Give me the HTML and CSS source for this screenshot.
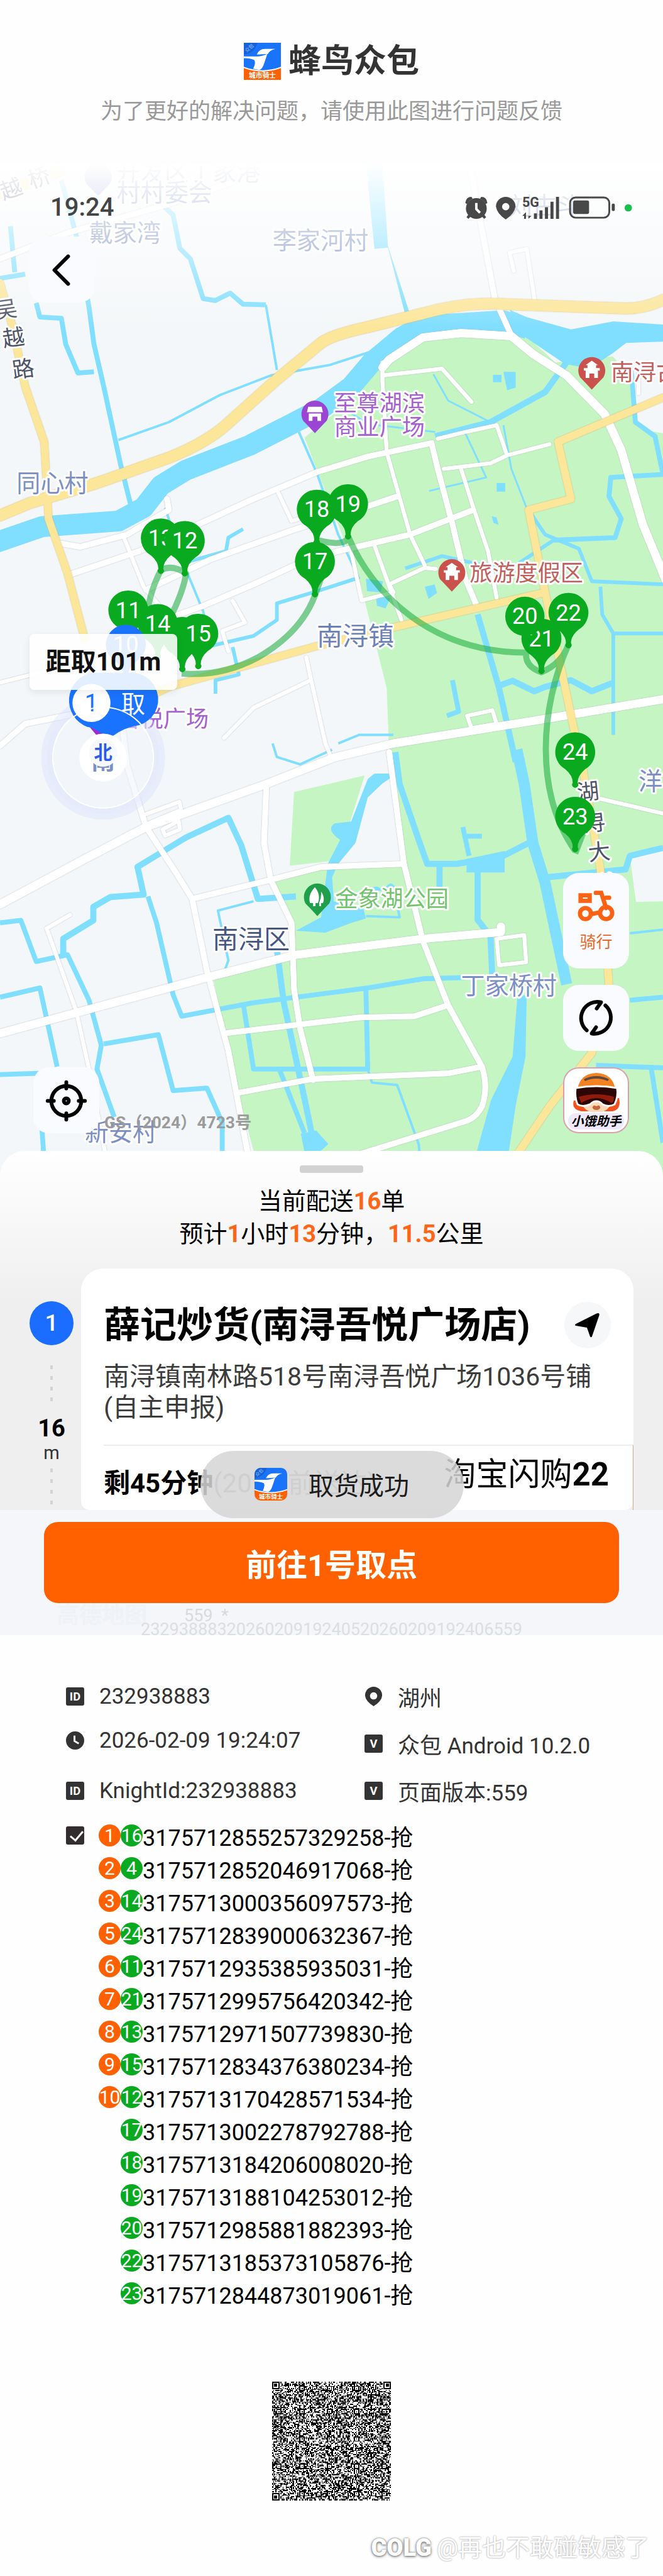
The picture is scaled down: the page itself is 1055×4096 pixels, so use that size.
FILE: index.html
```html
<!DOCTYPE html>
<html lang="zh-CN">
<head>
    <meta charset="utf-8">
    <title>蜂鸟众包</title>
    <link rel="stylesheet" href="styles.css">
</head>
<body>

<svg class="defs" width="0" height="0">
    <symbol id="logo" viewBox="0 0 60 60">
        <rect width="60" height="60" fill="#1a73fb"/>
        <path d="M0 0H22Q18 17 0 19z" fill="#1763d6"/>
        <text x="10" y="11" class="logo-corner" transform="rotate(-42 10 10)">众包</text>
        <path d="M21 19Q25 10 34 10H51Q42 12 39 18z" fill="#fff"/>
        <path d="M0 22H22Q29 22 38 18L33 33Q30 43 25 44L15 42Q20 33 17 28Q11 25 0 25z" fill="#fff"/>
        <path d="M0 39Q30 50 60 39V60H0z" fill="#fff"/>
        <path d="M0 41Q30 52 60 41V60H0z" fill="#ff6000"/>
        <text x="30" y="57" class="logo-foot">城市骑士</text>
    </symbol>
    <symbol id="pin" viewBox="-32 -32 64 96" overflow="visible">
        <path d="M0 -32A32 32 0 0 1 16 28Q4 38 4 50A5 5 0 1 1 -4 50Q-4 38 -16 28A32 32 0 0 1 0 -32z"/>
    </symbol>
    <symbol id="poi" viewBox="-22 -22 44 54" overflow="visible">
        <path d="M0 -22A22 22 0 0 1 19 11Q12 18 0 31Q-12 18 -19 11A22 22 0 0 1 0 -22z"/>
    </symbol>
    <symbol id="id" viewBox="0 0 30 30">
        <rect width="30" height="30" rx="3" fill="#333"/>
        <text x="15" y="22" class="glyph">ID</text>
    </symbol>
    <symbol id="ver" viewBox="0 0 30 30">
        <rect width="30" height="30" rx="3" fill="#333"/>
        <text x="15" y="22" class="glyph">V</text>
    </symbol>
</svg>

<header class="top">
    <div class="brand">
        <svg class="brand-logo"><use href="#logo"/></svg>
        <h1>蜂鸟众包</h1>
    </div>
    <p>为了更好的解决问题，请使用此图进行问题反馈</p>
</header>

<section class="phone">
    <div class="map">
        <svg class="map-canvas" viewBox="0 266 1080 1650">
            <defs>
                <linearGradient id="fade" x1="0" y1="0" x2="0" y2="1">
                    <stop offset="0" stop-color="#fff"/>
                    <stop offset="0.3" stop-color="#fff" stop-opacity="0.7"/>
                    <stop offset="1" stop-color="#fff" stop-opacity="0"/>
                </linearGradient>
            </defs>
            <rect y="266" width="1080" height="1650" fill="#f4f7f9"/>

            <!-- parks -->
            <g fill="#c6f5c4">
                <path d="M496 712L585 640 625 585 690 548 740 540H850L905 590 998 580 1024 607 1033 690 1080 705V1916H425L413 1873 375 1732 348 1595 479 1554 475 1497 441 1432 544 1406H654L634 1233 630 1120 585 942z"/>
                <path d="M479 1289L594 1262 551 1400 472 1409z"/>
            </g>
            <g fill="#f4f7f9">
                <path d="M998 575L1020 560H1080V705L1050 700 1033 640z"/>
                <path d="M1026 1393L1080 1380V1467L1036 1468z"/>
                <path d="M554 1402L579 1372 599 1298 628 1262 654 1402z"/>
            </g>

            <!-- water -->
            <g class="water">
                <path class="w40" d="M-10 884L69 857 193 848 234 826 262 790 303 765 406 725 475 690 523 665 572 629 606 589 654 549 689 530 820 522 860 535"/>
                <path class="w9" d="M930 580L888 638 799 687 709 710"/>
                <path class="w7" d="M17 368L24 443M0 453L41 446M59 493L65 516 100 518 107 560 127 607 153 605"/>
                <path class="w7" d="M100 293L124 382 145 500 153 560 169 629 196 754 214 826"/>
                <path class="w7" d="M265 334L282 350 293 404 310 421 331 486 351 489 375 477 396 495 433 496"/>
                <path class="w4" d="M433 496L444 560 451 602M193 716L275 687 358 643 441 611 537 594 620 567"/>
                <path class="w4" d="M482 692L517 772 551 870 585 942M269 826L296 910 331 995 344 1049"/>
                <path class="w5" d="M303 915L368 897 372 875 396 861M585 940L523 960 451 982V1009L413 1035 344 1051M379 1053L389 1098 351 1107V1129"/>
                <path class="w7" d="M1028 600L1035 687 1067 710 1080 772 995 777 992 808 1012 844 1002 875 902 879"/>
                <path class="w5" d="M861 830L888 870 943 893 964 946 1080 951M978 955L981 1000 999 1031H1080M999 1031V1196M902 879L840 920 810 925 720 905 660 925"/>
                <path class="w3" d="M706 609L730 652 799 687M820 692L833 763 861 835M758 705L792 777 699 799M560 665L600 690 709 703"/>
                <path class="w9" d="M778 1000L813 1120 840 1240M813 1116L835 1108 870 1125 888 1118 930 1107 964 1125 999 1111"/>
                <path class="w18" d="M842 1220L854 1276 868 1372 888 1437 923 1602"/>
                <path class="w9" d="M888 1428L1019 1415 1026 1393 1080 1380M861 1372L820 1393 744 1406 696 1406 682 1367 651 1276 644 1224M716 1411V1445M778 1406V1497L799 1524 802 1593"/>
                <path class="w7" d="M0 1502L34 1498 59 1565 110 1554 145 1628 165 1701 158 1740 186 1818"/>
                <path class="w9" d="M103 1554V1528L152 1498V1476L180 1460 234 1456 224 1411 303 1363 372 1331 393 1376 420 1463 482 1459"/>
                <path class="w7" d="M241 1459L255 1502 282 1619 296 1654 413 1632 599 1608 689 1593 758 1591"/>
                <path class="w4" d="M413 1467L355 1482 372 1563 366 1580M596 1491L651 1493 648 1478M599 1740L606 1762 647 1766 682 1862 684 1880"/>
                <path class="w9" d="M451 1545L462 1630 496 1788 515 1880"/>
                <path class="w7" d="M396 1632L413 1740 599 1740 596 1608M455 1740L496 1844M169 1699L258 1684 282 1775 337 1771 362 1827V1880M0 1623L65 1608 93 1736M0 1749L62 1747 72 1890"/>
                <path class="w4" d="M444 1210L451 1232 489 1244 541 1220M551 1210L585 1196 641 1196M1026 1519L1080 1513"/>
                <path class="w7" d="M971 1734L1080 1738M1061 1740L1080 1860M1026 1628L1080 1623M737 1107L747 1158 728 1165M754 1346L764 1393M756 1361H785"/>
            </g>
            <g fill="#80deff">
                <path d="M596 266H623L632 400 668 512H660L632 403 610 405z"/>
                <path d="M830 504L858 516 930 536 999 523 1080 528V556L1020 558 998 575 960 600 920 592 850 545z"/>
                <path d="M843 1620H858L856 1720 840 1800 828 1880H775L800 1790 835 1720z"/>
                <path d="M610 1259H647L623 1275 599 1298 579 1372 551 1406 541 1428 544 1467 592 1479 596 1495 572 1502 530 1518 482 1515 523 1493 534 1406 554 1367Q530 1350 545 1340L572 1337 599 1268z"/>
                <path d="M760 1398L822 1385V1420H760zM600 1450q12 -14 25 0zM625 1450q12 -24 22 0zM490 1845L515 1840 535 1862 515 1880H497z"/>
                <path d="M803 610h14v12h-14zM820 605h20v26l-14 4zM809 786h14v14h-14zM801 840l8 2 3 12-8-3zM596 942l28 4-4 18-22-2zM692 955l16-4 4 14-14 10zM612 968l24 6-8 16-14-4z"/>
            </g>

            <!-- minor roads, edge first and fill on top -->
            <g class="roads edge">
                <use href="#r14"/><use href="#r9"/><use href="#r6"/>
            </g>
            <g class="roads fill">
                <path id="r14" class="r14" d="M623 598L634 585 689 549 751 542 833 547 868 576 923 611 985 674 1012 732 1047 853 1084 943M1080 1138L895 1169 641 1210 544 1233 434 1276 238 1346 138 1398 0 1472M0 1682L344 1589 482 1554 689 1528 816 1517V1508"/>
                <path id="r9" class="r9" d="M765 266L806 486 833 546M0 421L110 379 275 332 380 296M96 884L131 890 207 870 275 830 272 812M114 935L227 897 344 844 413 812 517 768 599 743 703 721 713 763 737 853 758 942 775 982M238 960L344 910 482 861 565 835 647 808M255 1013L331 986 413 951 482 919 551 897 668 870 771 830M0 1214L41 1178 172 1152M200 1187L207 1246 238 1346 289 1424 313 1463 337 1580 372 1710 406 1890M434 1276L430 1372 441 1432 475 1502 479 1610 489 1675 510 1758M634 1224L658 1406 689 1532 730 1636 785 1736Q796 1770 785 1801Q775 1820 758 1825L565 1885M313 1463L441 1432 523 1411 658 1406M365 1682L585 1656 675 1654 730 1636M386 1779L510 1756 730 1747 785 1736"/>
                <path id="r6" class="r6" d="M871 489L858 405 830 411 837 441M623 611L720 600 768 654M623 590V620L630 736 668 870 692 920M200 870L234 955 275 1004M451 797L475 848 510 837M713 714L758 703 809 692 826 741M723 763L799 754 826 741 895 723M751 763L771 826 795 897 809 973M572 897L589 977 641 964 634 951 692 924 710 926M610 888L654 1009M379 978L399 1013 362 1027 372 1060M0 1111L138 1076M499 1070L506 1103 530 1210 541 1236M506 1107L413 1152 365 1201M809 1528L854 1522 857 1566 813 1571zM114 1489L76 1511 124 1645 145 1740 172 1880M761 1165L802 1156 809 1178 768 1185zM978 1300L1080 1324M238 1325L292 1305 295 1318 242 1340M265 1350l26-14 2 14-24 10zM1040 640V600L1055 590"/>
            </g>

            <!-- trunk roads -->
            <g class="trunk edge">
                <use href="#t18"/><use href="#t12"/>
            </g>
            <g class="trunk fill">
                <path id="t18" class="t18" d="M0 839L48 819 158 786 275 745Q337 720 370 690L448 620 523 558Q540 545 600 532L689 510Q760 490 826 495L1019 502Q1050 502 1080 488M0 314L96 278"/>
                <path id="t12" class="t12" d="M0 460L20 530 41 629 72 719 76 786 79 844 110 933 138 1040M230 1140L275 1118 510 1053 654 1018 888 964 861 830 930 812 909 719 1080 647M888 964L916 1098 937 1196 950 1255 978 1415 992 1602 964 1714 895 1801 835 1890"/>
            </g>

            <!-- delivery route -->
            <g class="route">
                <path d="M296 1096Q360 1102 420 1070Q490 1030 513 969L527 930M517 879Q560 890 568 875M568 875C606 964 700 1062 857 1062Q855 1085 882 1094Q915 1080 926 1049C880 1150 870 1290 937 1385M262 928Q280 918 303 933Q300 960 275 1010M262 928Q240 970 238 1020M937 1389L952 1350"/>
            </g>

            <g class="label village">
                <text x="145" y="380">戴家湾</text>
                <text x="444" y="392">李家河村</text>
                <text x="27" y="787">同心村</text>
                <text x="751" y="1605">丁家桥村</text>
                <text x="138" y="1844">新安村</text>
                <text x="1040" y="1272">洋</text>
                <text x="190" y="280">开发区丁家港</text>
                <text x="190" y="314">村村委会</text>
                <text x="828" y="336">刘古斗</text>
            </g>
            <g class="label town">
                <text x="516" y="1036">南浔镇</text>
                <text x="346" y="1529" class="dark">南浔区</text>
            </g>
            <g class="label road">
                <text x="-8" y="504" transform="rotate(-8 10 504)">吴</text>
                <text x="4" y="550" transform="rotate(-8 22 550)">越</text>
                <text x="20" y="601" transform="rotate(-8 37 601)">路</text>
                <text x="0" y="308" transform="rotate(-20 18 308)">越</text>
                <text x="46" y="290" transform="rotate(-20 62 290)">桥</text>
                <text x="940" y="1289" transform="rotate(-6 958 1289)">湖</text>
                <text x="950" y="1340" transform="rotate(-6 968 1340)">浔</text>
                <text x="958" y="1387" transform="rotate(-6 976 1387)">大</text>
                <text x="966" y="1440" transform="rotate(-6 984 1440)">道</text>
            </g>
            <g class="label poi">
                <text x="544" y="657" fill="#a55fd0">至尊湖滨</text>
                <text x="544" y="695" fill="#a55fd0">商业广场</text>
                <text x="192" y="1170" fill="#a55fd0">吾悦广场</text>
                <text x="995" y="606" fill="#c0605c">南浔古镇</text>
                <text x="765" y="933" fill="#c0605c">旅游度假区</text>
                <text x="546" y="1463" fill="#72c46c">金象湖公园</text>
            </g>
            <use href="#poi" x="491" y="652" width="44" height="54" fill="#9b45d4"/>
            <use href="#poi" x="942" y="581" width="44" height="54" fill="#c9534c"/>
            <use href="#poi" x="714" y="910" width="44" height="54" fill="#c9534c"/>
            <use href="#poi" x="495" y="1438" width="44" height="54" fill="#1f9f4a"/>
            <use href="#poi" x="138" y="266" width="44" height="54" fill="#9aa2d8"/>
            <g fill="#fff">
                <path d="M502 662h22l2 9h-26zM503 673h20v12h-6v-7h-8v7h-6z"/>
                <path id="gate" d="M964 587l10 7h-3v5h6v4h-3v12h-6v-7h-8v7h-6v-12h-3v-4h6v-5h-3z"/>
                <use href="#gate" x="-228" y="329"/>
                <path d="M513 1444q10 12 5 26h-4v5h-4v-5h-5q-4-14 8-26zM523 1451q7 10 3 19h-3v5h-3v-6q4-9 3-18z"/>
            </g>

            <g class="pins">
                <use href="#pin" x="230" y="844" width="64" height="96"/>
                <text x="262" y="876">13</text>
                <use href="#pin" x="269" y="848" width="64" height="96"/>
                <text x="301" y="880">12</text>
                <use href="#pin" x="484" y="797" width="64" height="96"/>
                <text x="516" y="829">18</text>
                <use href="#pin" x="535" y="788" width="64" height="96"/>
                <text x="567" y="820">19</text>
                <use href="#pin" x="481" y="882" width="64" height="96"/>
                <text x="513" y="914">17</text>
                <use href="#pin" x="177" y="961" width="64" height="96"/>
                <text x="209" y="993">11</text>
                <use href="#pin" x="265" y="1004" width="64" height="96"/>
                <use href="#pin" x="225" y="983" width="64" height="96"/>
                <text x="257" y="1015">14</text>
                <use href="#pin" x="291" y="999" width="64" height="96"/>
                <text x="323" y="1031">15</text>
                <use href="#pin" x="850" y="1007" width="64" height="96"/>
                <text x="882" y="1039">21</text>
                <circle cx="855" cy="1003" r="32"/>
                <text x="855" y="1003">20</text>
                <use href="#pin" x="894" y="965" width="64" height="96"/>
                <text x="926" y="997">22</text>
                <use href="#pin" x="905" y="1192" width="64" height="96"/>
                <text x="937" y="1224">24</text>
                <use href="#pin" x="905" y="1297" width="64" height="96"/>
                <text x="937" y="1329">23</text>
                <use href="#pin" x="173" y="1017" width="64" height="96" class="blue"/>
                <text x="205" y="1049">10</text>
            </g>

            <!-- pickup marker and own position -->
            <circle cx="168" cy="1233" r="92" class="halo"/>
            <path d="M140 1176L160 1200 176 1194zM180 1200L206 1180 190 1176z" fill="#9b2fd0"/>
            <path d="M149 1095H210A42 42 0 0 1 218 1182Q200 1186 185 1197Q174 1200 160 1190Q150 1184 142 1183A46 46 0 0 1 149 1095z" fill="#1a73ff"/>
            <circle cx="149" cy="1144" r="31" fill="#fff"/>
            <text x="149" y="1144" class="pick" fill="#1a73ff">1</text>
            <text x="217" y="1146" class="pick" fill="#fff">取</text>
            <circle cx="168" cy="1233" r="82" class="ring"/>
            <circle cx="168" cy="1233" r="39" fill="#fff"/>
            <text x="168" y="1239" class="self under">南</text>
            <circle cx="168" cy="1225" r="23" fill="#f8f9ff"/>
            <text x="168" y="1225" class="self">北</text>

            <rect y="266" width="1080" height="270" fill="url(#fade)"/>
            <text x="170" y="1827" class="licence">GS（2024）4723号</text>
        </svg>

        <div class="status">
            <span>19:24</span>
            <svg class="status-icons" viewBox="0 0 272 40">
                <g fill="#484848">
                    <circle cx="18" cy="21" r="17"/>
                    <path d="M0 12Q1 2 10 2L12 5Q5 8 3 14zM36 12Q35 2 26 2L24 5Q31 8 33 14zM5 31l4 3-4 4-3-3zM31 31l-4 3 4 4 3-3z"/>
                    <path d="M66 2A16 16 0 0 1 82 18Q80 30 66 39Q52 30 50 18A16 16 0 0 1 66 2zM66 12a6 6 0 1 0 0 12a6 6 0 1 0 0-12z" fill-rule="evenodd"/>
                    <path d="M99 27v11h-3v-5h-3zM103 27v11l5-5h-5zM112 29h5v9h-5zM121 24h5v14h-5zM130 19h5v19h-5zM139 10h5v28h-5zM148 2h5v36h-5z"/>
                    <rect x="176" y="8" width="26" height="22" rx="3"/>
                    <rect x="239" y="13" width="5" height="12" rx="2"/>
                </g>
                <path d="M18 12v10l6 6" fill="none" stroke="#fff" stroke-width="4"/>
                <text x="93" y="18">5G</text>
                <rect x="171" y="3" width="64" height="33" rx="9" fill="none" stroke="#484848" stroke-width="3"/>
                <circle cx="266" cy="20" r="6" fill="#1ac04e"/>
            </svg>
        </div>

        <button class="tile back" aria-label="返回">
            <svg viewBox="0 0 106 106"><path d="M63 32L41 54l22 22"/></svg>
        </button>

        <div class="distance">距取101m</div>

        <button class="tile locate" aria-label="定位">
            <svg viewBox="0 0 106 106"><circle cx="53" cy="54" r="24"/><circle cx="53" cy="54" r="4"/><path d="M53 24v10M53 74v10M23 54h10M73 54h10"/></svg>
        </button>

        <div class="tools">
            <button class="tile ride">
                <svg viewBox="0 0 62 50"><path d="M5 7h15v9H5zM30 3h9l8 25M47 11h5"/><circle cx="13" cy="37" r="9"/><circle cx="47" cy="36" r="10"/><path d="M22 38l15-3"/></svg>
                骑行
            </button>
            <button class="tile refresh" aria-label="刷新">
                <svg viewBox="0 0 106 106"><path d="M38 73A26 26 0 0 1 61 28L54 38M68 33A26 26 0 0 1 46 78L53 68"/></svg>
            </button>
            <button class="tile helper">
                <svg viewBox="0 0 80 62">
                    <path d="M4 44Q0 58 16 61H66Q80 58 76 40z" fill="#f4511f"/>
                    <path d="M10 26Q14 1 40 0Q66 1 70 26z" fill="#f58220"/>
                    <path d="M20 10Q40 0 60 10L58 13Q40 5 22 13z" fill="#5a4a42"/>
                    <ellipse cx="40" cy="49" rx="22" ry="14" fill="#ffd9b8"/>
                    <path d="M7 24Q40 18 73 24Q75 38 69 50Q60 55 50 50Q40 40 30 50Q18 55 10 50Q5 38 7 24z" fill="#2c0505" stroke="#fff" stroke-width="3"/>
                    <path d="M12 38Q40 30 68 38Q68 46 64 48Q40 32 16 48z" fill="#8f1c0a"/>
                    <path d="M37 55q3 2 6 0" fill="none" stroke="#c46a40"/>
                </svg>
                <b>小饿助手</b>
            </button>
        </div>
    </div>

    <div class="sheet">
        <div class="handle"></div>
        <p class="summary">当前配送<b>16</b>单<br>预计<b>1</b>小时<b>13</b>分钟，<b>11.5</b>公里</p>

        <div class="stop">
            <div class="track">
                <span class="num">1</span>
                <i class="dash"></i>
                <strong>16</strong>
                <small>m</small>
                <i class="dash"></i>
            </div>
            <article class="card">
                <div class="card-head">
                    <h2>薛记炒货(南浔吾悦广场店)</h2>
                    <button class="nav" aria-label="导航"><svg viewBox="0 0 72 72"><path d="M54 21L43 53Q42 56 40 54L35 40L18 37Q15 36 18 34L50 18Q55 16 54 21z"/></svg></button>
                </div>
                <p class="address">南浔镇南林路518号南浔吾悦广场1036号铺<br>(自主申报)</p>
                <div class="card-foot">
                    <p class="left"><b>剩45分钟</b>(20:09前送达)</p>
                    <p class="source">淘宝闪购<b>22</b></p>
                </div>
            </article>
        </div>

        <div class="action">
            <button class="go">前往1号取点</button>
            <p class="ver"><span>高德地图</span>559&nbsp; *</p>
            <p class="trace">2329388832026020919240520260209192406559</p>
        </div>

        <div class="toast">
            <svg><use href="#logo"/></svg>
            取货成功
        </div>
    </div>
</section>

<section class="report">
    <div class="info">
        <div class="item"><svg><use href="#id"/></svg>232938883</div>
        <div class="item"><svg viewBox="0 0 30 34"><path d="M15 1a14 14 0 0 1 14 15q-1 9-14 17q-13-8-14-17a14 14 0 0 1 14-15zM15 10a6 6 0 1 0 0 12a6 6 0 1 0 0-12z" fill="#333" fill-rule="evenodd"/></svg>湖州</div>
        <div class="item time"><svg viewBox="0 0 30 30"><circle cx="15" cy="15" r="15" fill="#333"/><path d="M14 7v9l7 4" fill="none" stroke="#fff" stroke-width="3"/></svg>2026-02-09 19:24:07</div>
        <div class="item"><svg><use href="#ver"/></svg>众包 Android 10.2.0</div>
        <div class="item"><svg><use href="#id"/></svg>KnightId:232938883</div>
        <div class="item"><svg><use href="#ver"/></svg>页面版本:559</div>
    </div>

    <div class="orders">
        <input type="checkbox" id="grab" aria-label="订单" checked>
        <ul>
            <li><i class="o">1</i><i class="g">16</i>3175712855257329258-抢</li>
            <li><i class="o">2</i><i class="g">4</i>3175712852046917068-抢</li>
            <li><i class="o">3</i><i class="g">14</i>3175713000356097573-抢</li>
            <li><i class="o">5</i><i class="g">24</i>3175712839000632367-抢</li>
            <li><i class="o">6</i><i class="g">11</i>3175712935385935031-抢</li>
            <li><i class="o">7</i><i class="g">21</i>3175712995756420342-抢</li>
            <li><i class="o">8</i><i class="g">13</i>3175712971507739830-抢</li>
            <li><i class="o">9</i><i class="g">15</i>3175712834376380234-抢</li>
            <li><i class="o">10</i><i class="g">12</i>3175713170428571534-抢</li>
            <li><i></i><i class="g">17</i>3175713002278792788-抢</li>
            <li><i></i><i class="g">18</i>3175713184206008020-抢</li>
            <li><i></i><i class="g">19</i>3175713188104253012-抢</li>
            <li><i></i><i class="g">20</i>3175712985881882393-抢</li>
            <li><i></i><i class="g">22</i>3175713185373105876-抢</li>
            <li><i></i><i class="g">23</i>3175712844873019061-抢</li>
        </ul>
    </div>

    <svg class="qr" viewBox="0 0 113 113"><path id="qr"/></svg>

    <footer class="mark"><b>COLG</b>@再也不敢碰敏感了</footer>
</section>

<script src="qr.js"></script>
</body>
</html>
```

FILE: styles.css
```css
* {
    box-sizing: border-box;
}

body {
    margin: 0;
    background: #fefefe;
    color: #000;
    font-family: Roboto, "Noto Sans CJK SC", sans-serif;
}

h1, h2, p, ul {
    margin: 0;
    padding: 0;
}

button {
    border: 0;
    padding: 0;
    font-family: inherit;
}

.defs {
    position: absolute;
}

.logo-corner {
    font-size: 8px;
    fill: #8fc0ff;
    text-anchor: middle;
}

.logo-foot {
    font-size: 11px;
    font-weight: bold;
    fill: #fff;
    text-anchor: middle;
}

.glyph {
    font-size: 19px;
    font-weight: bold;
    fill: #fff;
    text-anchor: middle;
}

/* header */

.top {
    padding: 68px 0 57px;
    text-align: center;
}

.brand {
    display: flex;
    justify-content: center;
    align-items: center;
    gap: 12px;
    height: 59px;
}

.brand-logo {
    width: 59px;
    height: 59px;
}

h1 {
    font-size: 52px;
    line-height: 60px;
    color: #333;
}

.top p {
    margin-top: 26px;
    font-size: 35px;
    line-height: 50px;
    color: #999;
}

/* map */

.map {
    position: relative;
}

.map-canvas {
    display: block;
    width: 100%;
}

.water path {
    fill: none;
    stroke: #80deff;
    stroke-linejoin: round;
}

.water .w3 { stroke-width: 3px; }
.water .w4 { stroke-width: 4px; }
.water .w5 { stroke-width: 6px; }
.water .w7 { stroke-width: 8px; }
.water .w9 { stroke-width: 10px; }
.water .w18 { stroke-width: 18px; }
.water .w40 { stroke-width: 34px; }

.roads, .trunk {
    fill: none;
    stroke-linejoin: round;
    stroke-linecap: round;
}

.roads.fill { stroke: #fff; }
.r14 { stroke-width: 13px; }
.r9 { stroke-width: 9px; }
.r6 { stroke-width: 6px; }

.trunk.fill { stroke: #fce69a; }
.t18 { stroke-width: 18px; }
.t12 { stroke-width: 12px; }

.roads.edge {
    stroke: #fff;
    filter: drop-shadow(0 0 1px #b9bcc4);
}

.trunk.edge {
    stroke: #e6cd86;
    filter: drop-shadow(0 0 1px #d6b968);
}

.route path {
    fill: none;
    stroke: #16a93a;
    stroke-opacity: 0.55;
    stroke-width: 10px;
    stroke-linejoin: round;
}

.map text {
    dominant-baseline: central;
}

.label {
    stroke: #fff;
    stroke-width: 6px;
    stroke-linejoin: round;
    paint-order: stroke;
}

.village {
    font-size: 39px;
    fill: #7b8fc4;
}

.town {
    font-size: 42px;
    fill: #6a82b8;
}

.town .dark {
    fill: #455680;
}

.road {
    font-size: 36px;
    fill: #4d5468;
}

.poi {
    font-size: 37px;
}

.pins {
    font-size: 37px;
    text-anchor: middle;
    fill: #09aa20;
}

.pins text {
    fill: #fff;
}

.pins .blue {
    fill: #1a73ff;
}

.pick {
    font-size: 39px;
    text-anchor: middle;
}

.halo {
    fill: rgba(240, 243, 252, 0.5);
    stroke: rgba(210, 218, 255, 0.35);
    stroke-width: 18px;
}

.ring {
    fill: none;
    stroke: #fff;
    stroke-width: 2px;
}

.self {
    font-size: 30px;
    font-weight: bold;
    text-anchor: middle;
    fill: #2c5be8;
}

.self.under {
    font-size: 39px;
    fill: #7b8fc4;
}

.licence {
    font-size: 27px;
    font-weight: bold;
    fill: #9b9b9b;
}

.status {
    position: absolute;
    top: 48px;
    left: 80px;
    right: 49px;
    display: flex;
    justify-content: space-between;
    align-items: center;
    font-size: 40px;
    line-height: 44px;
    font-weight: 500;
    color: #444;
}

.status-icons {
    width: 266px;
    height: 39px;
}

.status-icons text {
    dominant-baseline: auto;
    font-size: 22px;
    font-weight: bold;
    fill: #484848;
}

.tile {
    display: block;
    width: 105px;
    height: 105px;
    border-radius: 25px;
    background: #fafbfe;
}

.tile svg {
    fill: none;
    stroke: #000;
    stroke-width: 6px;
    stroke-linecap: round;
    stroke-linejoin: round;
}

.back {
    position: absolute;
    top: 116px;
    left: 46px;
}

.locate {
    position: absolute;
    left: 53px;
    bottom: 70px;
}

.distance {
    position: absolute;
    top: 748px;
    left: 47px;
    width: 235px;
    height: 89px;
    border-radius: 8px;
    background: rgba(255, 255, 255, 0.88);
    box-shadow: 0 4px 12px rgba(0, 0, 0, 0.08);
    font-size: 40px;
    line-height: 89px;
    font-weight: bold;
    text-align: center;
    color: #111;
}

.tools {
    position: absolute;
    right: 54px;
    bottom: 70px;
    display: flex;
    flex-direction: column;
    gap: 26px;
}

.ride {
    height: 152px;
    font-size: 26px;
    line-height: 36px;
    color: #e8682a;
}

.ride svg {
    display: block;
    width: 60px;
    height: 50px;
    margin: 4px auto 14px;
    stroke: #fb6214;
    stroke-width: 7px;
    stroke-linejoin: miter;
}

.helper {
    border: 2px solid #dba0ac;
    background: #fff;
    font-size: 20px;
    font-style: italic;
    line-height: 26px;
}

.helper svg {
    display: block;
    width: 80px;
    height: 62px;
    margin: 4px auto 2px;
    stroke: none;
}

.helper b {
    display: block;
    margin: 0 6px;
    border-radius: 12px;
    background: #efe8f8;
    color: #000;
}

/* bottom sheet */

.sheet {
    position: relative;
    margin-top: -42px;
    padding-top: 23px;
    border-radius: 40px 40px 0 0;
    background: linear-gradient(#fff, #efefef 240px);
}

.handle {
    width: 101px;
    height: 12px;
    margin: 0 auto 19px;
    border-radius: 4px;
    background: #d2d2d2;
}

.summary {
    font-size: 38px;
    line-height: 52px;
    text-align: center;
}

.summary b {
    color: #fd6617;
}

.stop {
    display: flex;
    margin-top: 29px;
    padding-right: 47px;
}

.track {
    flex: 0 0 129px;
    display: flex;
    flex-direction: column;
    align-items: center;
    padding: 52px 0 8px 35px;
}

.num {
    width: 70px;
    height: 70px;
    border-radius: 50%;
    background: #1a6dff;
    color: #fff;
    font-size: 37px;
    line-height: 70px;
    font-weight: 500;
    text-align: center;
}

.dash {
    flex: 1;
    width: 4px;
    margin: 32px 0 20px;
    background: repeating-linear-gradient(#d3d3d3 0 6px, transparent 6px 17px);
}

.dash:last-child {
    flex: 0 0 58px;
    margin: 6px 0 0;
}

.track strong {
    font-size: 38px;
    line-height: 40px;
}

.track small {
    font-size: 29px;
    line-height: 38px;
    color: #333;
}

.card {
    flex: 1;
    min-width: 0;
    padding: 55px 0 0 36px;
    border-radius: 35px 35px 14px 14px;
    background: #fff;
}

.card-head {
    display: flex;
    justify-content: space-between;
    align-items: center;
    height: 70px;
    padding-right: 36px;
}

h2 {
    font-size: 58px;
    line-height: 70px;
    white-space: nowrap;
}

.nav {
    width: 74px;
    height: 74px;
    border-radius: 50%;
    background: #f5f7f9;
}

.address {
    margin: 23px 0 34px;
    font-size: 41px;
    line-height: 49px;
    color: #3c3c3c;
}

.card-foot {
    display: flex;
    justify-content: space-between;
    height: 104px;
    padding-right: 38px;
    border-top: 2px solid #eee;
    border-right: 1px solid #f5a070;
    line-height: 60px;
    white-space: nowrap;
}

.left {
    padding-top: 30px;
    font-size: 42px;
    color: #aaa;
}

.left b {
    color: #000;
}

.source {
    padding-top: 16px;
    font-size: 51px;
}

.action {
    height: 199px;
    padding: 19px 70px 0;
    background: #f4f6f9;
}

.go {
    display: block;
    width: 100%;
    height: 129px;
    border-radius: 22px;
    background: #ff6000;
    color: #fff;
    font-size: 49px;
    font-weight: bold;
}

.ver {
    display: flex;
    align-items: center;
    margin: 8px 0 0 20px;
    font-size: 27px;
    line-height: 24px;
    color: #d8dadd;
}

.ver span {
    width: 203px;
    font-size: 36px;
    font-weight: bold;
    color: #eff2f6;
}

.trace {
    font-size: 27px;
    line-height: 20px;
    text-align: center;
    color: #dcdee1;
}

.toast {
    position: absolute;
    left: 50%;
    bottom: 186px;
    display: flex;
    align-items: center;
    justify-content: center;
    gap: 34px;
    width: 419px;
    height: 107px;
    margin-left: -209px;
    border-radius: 54px;
    background: rgba(213, 213, 213, 0.86);
    font-size: 40px;
    color: #1c1c1c;
}

.toast svg {
    width: 52px;
    height: 52px;
    border-radius: 10px;
}

/* report */

.report {
    padding: 60px 0 22px;
}

.info {
    display: grid;
    grid-template-columns: 1fr 1fr;
    grid-auto-rows: 75px;
    padding-left: 105px;
    font-size: 35px;
    color: #333;
}

.item {
    display: flex;
    align-items: center;
    gap: 24px;
}

.item svg {
    width: 29px;
    height: 33px;
}

.time {
    height: 65px;
}

.orders {
    display: flex;
    gap: 23px;
    margin-top: 8px;
    padding-left: 105px;
}

.orders input {
    appearance: none;
    width: 29px;
    height: 29px;
    margin: 11px 0 0;
    border-radius: 3px;
    background: #332d2f;
}

.orders input::before {
    content: "";
    display: block;
    width: 9px;
    height: 17px;
    margin: 3px 0 0 11px;
    border: solid #fff;
    border-width: 0 3px 3px 0;
    transform: rotate(40deg);
}

.orders li {
    display: flex;
    align-items: center;
    height: 52px;
    font-size: 36px;
}

.orders i {
    width: 35px;
    height: 35px;
    border-radius: 50%;
    color: #fff;
    font-size: 30px;
    line-height: 35px;
    font-style: normal;
    text-align: center;
}

.orders .o {
    background: #ff6000;
}

.orders .g {
    background: #09aa20;
}

.qr {
    display: block;
    width: 189px;
    height: 189px;
    margin: 114px auto 52px;
    shape-rendering: crispEdges;
}

.mark {
    display: flex;
    justify-content: flex-end;
    align-items: center;
    gap: 8px;
    padding-right: 22px;
    font-size: 38px;
    line-height: 46px;
    color: #fff;
    text-shadow: 0 0 3px #aaa, 0 0 2px #ccc;
}

.mark b {
    font-weight: 900;
    text-shadow: 0 1px 4px #555, 0 0 2px #999;
}
```

FILE: qr.js
```js
// version 24 code: 113 modules per side
const size = 113;
const marks = [6, 28, 54, 80, 106];
let seed = 232938883;

function rand() {
    seed = (seed * 1103515245 + 12345) % 2147483648;
    return seed / 2147483648;
}

// concentric square: dark or light by distance from the centre
function ring(x, y, cx, cy) {
    return Math.max(Math.abs(x - cx), Math.abs(y - cy));
}

function module(x, y) {
    for (const [cx, cy] of [[3, 3], [size - 4, 3], [3, size - 4]]) {
        const d = ring(x, y, cx, cy);
        if (d <= 4) return d !== 2 && d !== 4;
    }
    for (const cx of marks) {
        for (const cy of marks) {
            const corner = (cx === 6 && cy === 6) || (cx === 106 && cy === 6) || (cx === 6 && cy === 106);
            if (!corner && ring(x, y, cx, cy) <= 2) return ring(x, y, cx, cy) !== 1;
        }
    }
    if (x === 6) return y % 2 === 0;
    if (y === 6) return x % 2 === 0;
    return rand() > 0.5;
}

let d = '';
for (let y = 0; y < size; y++) {
    for (let x = 0; x < size; x++) {
        if (module(x, y)) d += `M${x} ${y}h1v1h-1z`;
    }
}
document.getElementById('qr').setAttribute('d', d);
```
